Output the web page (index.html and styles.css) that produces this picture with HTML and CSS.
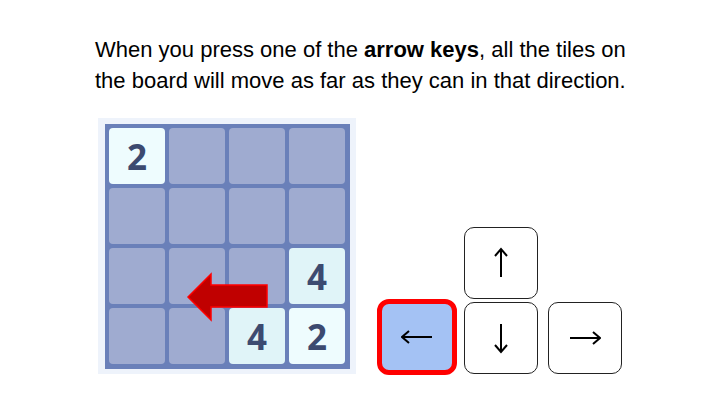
FILE: index.html
```html
<!DOCTYPE html>
<html>
<head>
<meta charset="utf-8">
<link rel="stylesheet" href="styles.css">
</head>
<body>
<div class="page">
  <p class="intro">When you press one of the <b>arrow keys</b>, all the tiles on<br>the board will move as far as they can in that direction.</p>
  <div class="demo">
    <div class="board-wrap">
      <div class="board">
        <div class="tile t2">2</div><div class="tile"></div><div class="tile"></div><div class="tile"></div>
        <div class="tile"></div><div class="tile"></div><div class="tile"></div><div class="tile"></div>
        <div class="tile"></div><div class="tile"></div><div class="tile"></div><div class="tile t4">4</div>
        <div class="tile"></div><div class="tile"></div><div class="tile t4">4</div><div class="tile t2">2</div>
      </div>
      <svg class="arrow" width="258" height="256" viewBox="0 0 258 256">
        <polygon points="90,179 113,156 113,167 169,167 169,189 113,189 113,202" fill="#c00000" stroke="#ff0000" stroke-width="1.5" stroke-linejoin="miter"/>
      </svg>
    </div>
    <div class="keys">
      <div class="key-row top">
        <div class="key"><svg width="32" height="32" viewBox="0 0 32 32"><path d="M16 30 V2 M10 9 L16 2 L22 9" fill="none" stroke="#000" stroke-width="2"/></svg></div>
      </div>
      <div class="key-row">
        <div class="key active"><svg width="32" height="32" viewBox="0 0 32 32"><path d="M31 16 H1 M8 10 L1 16 L8 22" fill="none" stroke="#000" stroke-width="2"/></svg></div>
        <div class="key down"><svg width="32" height="32" viewBox="0 0 32 32"><path d="M16 2 V30 M10 23 L16 30 L22 23" fill="none" stroke="#000" stroke-width="2"/></svg></div>
        <div class="key right"><svg width="32" height="32" viewBox="0 0 32 32"><path d="M1 16 H31 M24 10 L31 16 L24 22" fill="none" stroke="#000" stroke-width="2"/></svg></div>
      </div>
    </div>
  </div>
</div>
</body>
</html>
```
FILE: styles.css
```css
html, body {
  margin: 0;
  padding: 0;
  background: #ffffff;
}
.page {
  width: 720px;
  height: 405px;
  padding-left: 95px;
  box-sizing: border-box;
  font-family: "Liberation Sans", Arial, sans-serif;
}
.intro {
  margin: 0;
  padding-top: 34px;
  font-size: 22px;
  line-height: 31px;
  color: #000;
}
.demo {
  display: flex;
  margin-top: 22px;
}
.board-wrap {
  position: relative;
  margin-left: 3px;
  width: 258px;
  height: 256px;
  background: #eef3fb;
  padding: 6px 6px 5px 7px;
  box-sizing: border-box;
}
.board {
  width: 245px;
  height: 245px;
  background: #6a80b9;
  padding: 4px;
  box-sizing: border-box;
  display: grid;
  grid-template-columns: repeat(4, 56px);
  grid-template-rows: repeat(4, 56px);
  gap: 4px;
}
.tile {
  background: #9fabd0;
  border-radius: 4px;
  display: flex;
  align-items: center;
  justify-content: center;
  font-family: "Open Sans", "Liberation Sans", sans-serif;
  font-weight: 700;
  font-size: 35px;
  color: #3c4a70;
}
.t2 { background: #eefcfe; }
.t4 { background: #e0f4f8; }
.arrow {
  position: absolute;
  left: 0;
  top: 0;
}
.keys {
  margin-left: 21px;
  margin-top: 109px;
  display: flex;
  flex-direction: column;
}
.key-row {
  display: flex;
  align-items: flex-start;
}
.key-row.top {
  padding-left: 87px;
  margin-bottom: 3px;
}
.key {
  width: 74px;
  height: 72px;
  box-sizing: border-box;
  border: 1px solid #222;
  border-radius: 10px;
  background: #fff;
  display: flex;
  align-items: center;
  justify-content: center;
}
.key.active {
  width: 80px;
  height: 76px;
  border: 5px solid #ff0000;
  border-radius: 12px;
  background: #a4c2f4;
  margin-top: -3px;
}
.key.down { margin-left: 7px; }
.key.right { margin-left: 10px; }
```
